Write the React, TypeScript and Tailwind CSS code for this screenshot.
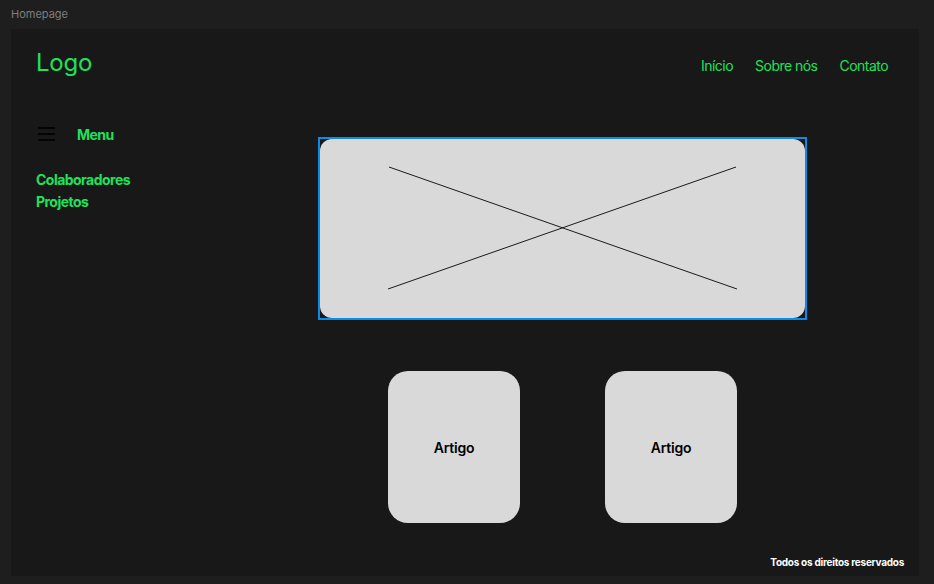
import React from 'react';

const green = 'text-[#1fe25b]';

function Hamburger() {
  return (
    <svg width="18" height="14" viewBox="0 0 18 14" className="block">
      <line x1="0" y1="1" x2="17" y2="1" stroke="#000" strokeWidth="1.6" />
      <line x1="0" y1="7" x2="17" y2="7" stroke="#000" strokeWidth="1.6" />
      <line x1="0" y1="13" x2="17" y2="13" stroke="#000" strokeWidth="1.6" />
    </svg>
  );
}

function ArticleCard() {
  return (
    <div className="w-[132px] h-[152px] rounded-[20px] bg-[#d9d9d9] flex items-center justify-center">
      <span className="text-[14px] font-semibold text-black tracking-[-0.015em]">Artigo</span>
    </div>
  );
}

export default function App() {
  return (
    <div
      className="w-[934px] h-[584px] bg-[#1e1e1e] flex flex-col overflow-hidden tracking-[-0.033em]"
      style={{ fontFamily: 'Inter, "Noto Sans", sans-serif' }}
    >
      {/* canvas label */}
      <div className="h-[29px] pl-[11px] flex items-center text-[11px] text-[#7f7f7f] leading-none pb-[1px] tracking-normal">
        Homepage
      </div>

      {/* frame */}
      <div className="ml-[11px] w-[908px] h-[547px] bg-[#181818] flex flex-col">
        {/* header */}
        <header className="h-[91px] pl-[25px] pr-[31px] pt-[19px] flex items-start justify-between">
          <div className={`text-[24px] leading-[30px] tracking-[-0.01em] ${green}`}>Logo</div>
          <nav className={`flex gap-[22px] text-[14px] leading-[20px] mt-[8px] ${green}`}>
            <span>Início</span>
            <span>Sobre nós</span>
            <span>Contato</span>
          </nav>
        </header>

        {/* body */}
        <div className="flex flex-1">
          <aside className="w-[195px] pl-[25px] pt-[7px]">
            <div className="flex items-center h-[14px]">
              <div className="ml-[2px]">
                <Hamburger />
              </div>
              <span className={`ml-[21px] text-[14px] font-bold ${green}`}>Menu</span>
            </div>
            <ul className={`mt-[28px] text-[14px] font-bold leading-[22px] ${green}`}>
              <li>Colaboradores</li>
              <li>Projetos</li>
            </ul>
          </aside>

          <main className="flex-1 flex flex-col items-center pt-[17px]">
            <div className="w-[489px] h-[183px] border-2 border-[#0c8ce9] bg-[#181818]">
              <div className="w-full h-full rounded-[12px] bg-[#d9d9d9]">
                <svg width="485" height="179" viewBox="0 0 485 179" className="block">
                  <line x1="69" y1="28" x2="417" y2="150" stroke="#1a1a1a" strokeWidth="1" />
                  <line x1="68" y1="150" x2="416" y2="28" stroke="#1a1a1a" strokeWidth="1" />
                </svg>
              </div>
            </div>

            <div className="mt-[51px] flex gap-[85px]">
              <ArticleCard />
              <ArticleCard />
            </div>

            <div className="self-end mt-[34px] mr-[15px] text-[10px] font-bold text-white leading-none tracking-[-0.026em]">
              Todos os direitos reservados
            </div>
          </main>
        </div>
      </div>
    </div>
  );
}
